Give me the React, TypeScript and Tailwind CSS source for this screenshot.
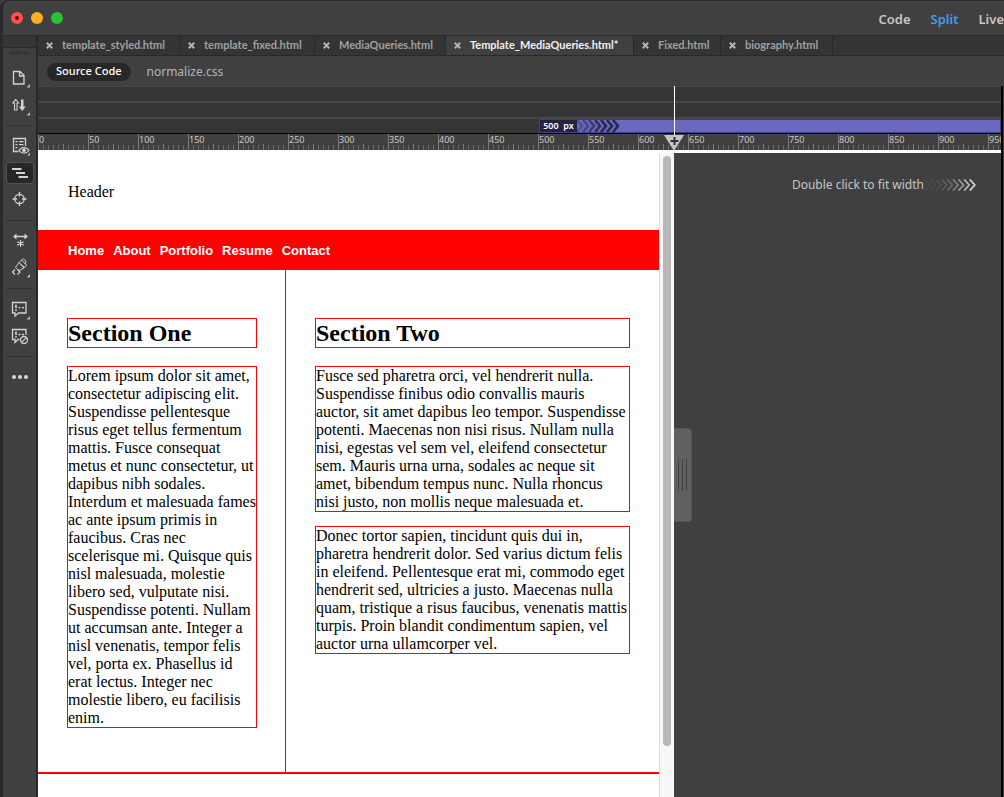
import React from "react";

const tabs = [
  { name: "template_styled.html", width: "w-[142px]" },
  { name: "template_fixed.html", width: "w-[135px]" },
  { name: "MediaQueries.html", width: "w-[131px]" },
  { name: "Template_MediaQueries.html*", width: "w-[188px]", active: true },
  { name: "Fixed.html", width: "w-[87px]" },
  { name: "biography.html", width: "w-[112px]" },
];

const rulerMarks = Array.from({ length: 20 }, (_, i) => i * 50);

function CloseMark() {
  return (
    <svg width="7" height="7" viewBox="0 0 7 7" aria-hidden="true">
      <path d="M.8 .8l5.400 5.400M6.200 .8l-5.400 5.400" stroke="currentColor" strokeWidth="2" />
    </svg>
  );
}

function Corner() {
  return <path d="M23 19v3.500h-3.500z" fill="#b8b8b8" stroke="none" />;
}

function ToolIcon({ children }: { children: React.ReactNode }) {
  return (
    <svg
      className="shrink-0"
      width="26"
      height="24"
      viewBox="0 0 26 24"
      fill="none"
      stroke="#d2d2d2"
      strokeWidth="1.3"
      aria-hidden="true"
    >
      {children}
    </svg>
  );
}

function Tool({
  label,
  height,
  active,
  children,
}: {
  label: string;
  height: string;
  active?: boolean;
  children: React.ReactNode;
}) {
  return (
    <button aria-label={label} className={`flex w-7 shrink-0 items-center justify-center ${height}`}>
      <span
        className={
          active
            ? "flex h-[22px] w-7 items-center justify-center overflow-hidden rounded-sm border border-[#505050] bg-[#272727]"
            : "flex"
        }
      >
        <ToolIcon>{children}</ToolIcon>
      </span>
    </button>
  );
}

function Divider({ height }: { height: string }) {
  return (
    <div className={`flex w-[26px] shrink-0 items-center ${height}`}>
      <div className="h-px w-full bg-[#333]" />
    </div>
  );
}

function Toolbar() {
  return (
    <aside className="flex w-[38px] shrink-0 flex-col border-l-[3px] border-r-2 border-l-[#2b2b2b] border-r-[#292929] bg-[#404040]">
      <div className="h-3 shrink-0 border-b border-[#292929] bg-[#353535]" />
      <div className="flex flex-col items-center">
        <div className="flex h-[15px] items-start pt-[3px]">
          <svg width="19" height="4" shapeRendering="crispEdges" aria-hidden="true">
            <path d="M0 2h19" stroke="#2e2e2e" strokeWidth="4" strokeDasharray="1 1" />
          </svg>
        </div>
        <Tool label="Open documents" height="h-[28px]">
          <path d="M6.500 6.500h6.500l4 4v8.500H6.500zM12.500 6.500v4.500H17" />
          <Corner />
        </Tool>
        <Tool label="File management" height="h-[28px]">
          <path d="M7.500 17v-7H5.800L8.700 6.500l3 3.500H10v7z" strokeWidth="1.100" />
          <path d="M14 6.500h2.500v7h2.200l-3.400 4.500-3.500-4.500H14z" fill="#d2d2d2" stroke="none" />
          <Corner />
        </Tool>
        <Divider height="h-[12px]" />
        <Tool label="Live view options" height="h-[28px]">
          <path d="M11.500 18.500h-5v-13h12v7.500" />
          <path d="M8.500 8.700h2M12 8.700h4.500M8.500 11.700h2M12 11.700h4.500M8.500 14.700h2" />
          <path d="M12 17.500c2.500-4 7.500-4 10 0-2.500 3.500-7.500 3.500-10 0z" fill="#404040" strokeWidth="1.100" />
          <circle cx="17" cy="17.200" r="1.900" fill="#d2d2d2" stroke="none" />
          <path d="M23 19.500v3h-3z" fill="#b8b8b8" stroke="none" />
        </Tool>
        <Tool label="Visual media queries" height="h-[28px]" active>
          <path d="M5 8h9.500M9 12h9M11.500 16h9.500" strokeWidth="2" />
        </Tool>
        <Tool label="Inspect" height="h-[24px]">
          <circle cx="12.500" cy="12" r="4.700" />
          <path d="M12.500 5v4.500M12.500 14.500V19M5.500 12H10M15 12h4.500" />
        </Tool>
        <Divider height="h-[18px]" />
        <Tool label="Expand all" height="h-[22px]">
          <path d="M8 8.500h11" strokeWidth="1.500" />
          <path d="M9.500 5.500L6 8.500l3.500 3zM17.500 5.500L21 8.500l-3.500 3z" fill="#d2d2d2" stroke="none" />
          <path d="M13.500 12v7M10.300 13.700l6.400 3.600M16.700 13.700l-6.400 3.600" strokeWidth="1.100" />
        </Tool>
        <Tool label="Format source code" height="h-[32px]">
          <path d="M8 14.500L5.500 17 8 19.500M10.500 14.500L13 17l-2.500 2.500" strokeWidth="1.200" />
          <path d="M8.500 12.500l3.500-5 5 5.500-5 2.500zM12 7.500l2.500-2.500 5 5-2.500 3M14.500 5l2-1.300 2.500 2.500-1 2.500M13 8.500l4 3.500" strokeWidth="1" />
          <Corner />
        </Tool>
        <Divider height="h-[10px]" />
        <Tool label="Apply comment" height="h-[32px]">
          <path d="M5.500 5.500h13.500v10.500h-7.500l-3.500 3V16H5.500z" />
          <path d="M9 7.800v3.500M9 12.400v1.600" strokeWidth="1.700" />
          <path d="M11.500 10.700h2M15 10.700h2" />
          <Corner />
        </Tool>
        <Tool label="Remove comment" height="h-[24px]">
          <path d="M12.500 14.500h-1.500l-3 3v-3H5.500v-10H19V10" />
          <path d="M9 6.500V10M9 11.200v1.500" strokeWidth="1.700" />
          <path d="M11.500 9.500h2M15 9.500h2" />
          <circle cx="17" cy="15" r="3.500" />
          <path d="M14.600 17.400l4.800-4.800" />
        </Tool>
        <Divider height="h-[14px]" />
        <Tool label="Customize toolbar" height="h-[28px]">
          <g fill="#d8d8d8" stroke="none">
            <circle cx="7" cy="12" r="2" />
            <circle cx="13" cy="12" r="2" />
            <circle cx="19" cy="12" r="2" />
          </g>
        </Tool>
      </div>
    </aside>
  );
}

function FitChevrons() {
  return (
    <svg width="52" height="12" fill="none" stroke="#dddddd" strokeWidth="1.6" aria-hidden="true">
      {Array.from({ length: 9 }, (_, i) => (
        <path key={i} d={`M${i * 5.6 + 1} .5l5 5.500-5 5.500`} opacity={0.05 + (0.95 * i * i) / 64} />
      ))}
    </svg>
  );
}

function QueryChevrons() {
  return (
    <svg width="44" height="12" fill="none" stroke="#292751" strokeWidth="2.6" aria-hidden="true">
      {Array.from({ length: 7 }, (_, i) => (
        <path key={i} d={`M${i * 6} 0l5 6-5 6`} opacity={Math.min(1, 0.4 + i * 0.15)} />
      ))}
    </svg>
  );
}

function MediaQueryBar() {
  return (
    <div className="relative h-12 shrink-0 border-b border-black bg-[#353535]">
      <div className="h-px bg-[#464646]" />
      <div className="mt-[14px] h-[2px] bg-[#464646]" />
      <div className="mt-[14px] h-[2px] bg-[#464646]" />
      <button className="absolute right-0 bottom-0 left-[501px] flex h-[14px] items-center border border-[#403c8c] bg-[#6c68bd]">
        <span className="flex h-full w-[37px] items-center justify-center bg-[#24223f] text-[9px] font-semibold whitespace-pre text-white">
          500  px
        </span>
        <QueryChevrons />
      </button>
    </div>
  );
}

function Ruler() {
  return (
    <div className="relative flex h-4 shrink-0 overflow-hidden bg-[#404040]">
      {rulerMarks.map((mark) => (
        <div key={mark} className="relative h-4 w-[50px] shrink-0">
          <svg className="absolute inset-0" width="50" height="16" shapeRendering="crispEdges" aria-hidden="true">
            <path d="M.5 0v16M25.500 10v6" stroke="#7c7c7c" />
            <path
              d="M5.500 11v5M10.500 11v5M15.500 11v5M20.500 11v5M30.500 11v5M35.500 11v5M40.500 11v5M45.500 11v5"
              stroke="#6a6a6a"
            />
          </svg>
          <span className="relative block pl-px text-[9px] leading-[11px] text-[#c8c8c8]">{mark}</span>
        </div>
      ))}
    </div>
  );
}

const paragraph = "text-base leading-[18px] border border-[#ff0000]";
const heading = "text-2xl leading-7 font-bold border border-[#ff0000]";

function PagePreview() {
  return (
    <main className="flex min-w-0 flex-1 flex-col bg-white font-['Liberation_Serif',serif] text-black">
      <header className="h-20 shrink-0 px-[30px] pt-8 text-base leading-5">Header</header>
      <nav className="flex h-10 shrink-0 items-center gap-[9px] bg-[#ff0000] px-[30px] pt-[2px] font-['Liberation_Sans',sans-serif] text-[13px] font-bold text-white">
        {["Home", "About", "Portfolio", "Resume", "Contact"].map((item) => (
          <a key={item} href="#">
            {item}
          </a>
        ))}
      </nav>
      <div className="flex h-[504px] shrink-0 border-b-2 border-[#ff0000]">
        <section className="w-[248px] shrink-0 border-r border-[#ff0000] pt-12 pr-7 pl-[29px]">
          <h2 className={heading}>Section One</h2>
          <p className={`mt-[18px] ${paragraph}`}>
            Lorem ipsum dolor sit amet, consectetur adipiscing elit. Suspendisse pellentesque risus eget tellus
            fermentum mattis. Fusce consequat metus et nunc consectetur, ut dapibus nibh sodales. Interdum et
            malesuada fames ac ante ipsum primis in faucibus. Cras nec scelerisque mi. Quisque quis nisl malesuada,
            molestie libero sed, vulputate nisi. Suspendisse potenti. Nullam ut accumsan ante. Integer a nisl
            venenatis, tempor felis vel, porta ex. Phasellus id erat lectus. Integer nec molestie libero, eu
            facilisis enim.
          </p>
        </section>
        <section className="min-w-0 flex-1 px-[29px] pt-12">
          <h2 className={heading}>Section Two</h2>
          <p className={`mt-[18px] ${paragraph}`}>
            Fusce sed pharetra orci, vel hendrerit nulla. Suspendisse finibus odio convallis mauris auctor, sit amet
            dapibus leo tempor. Suspendisse potenti. Maecenas non nisi risus. Nullam nulla nisi, egestas vel sem vel,
            eleifend consectetur sem. Mauris urna urna, sodales ac neque sit amet, bibendum tempus nunc. Nulla rhoncus
            nisi justo, non mollis neque malesuada et.
          </p>
          <p className={`mt-[14px] ${paragraph}`}>
            Donec tortor sapien, tincidunt quis dui in, pharetra hendrerit dolor. Sed varius dictum felis in eleifend.
            Pellentesque erat mi, commodo eget hendrerit sed, ultricies a justo. Maecenas nulla quam, tristique a
            risus faucibus, venenatis mattis turpis. Proin blandit condimentum sapien, vel auctor urna ullamcorper
            vel.
          </p>
        </section>
      </div>
    </main>
  );
}

export default function App() {
  return (
    <div className="flex h-screen flex-col overflow-hidden bg-[#404040] font-['Noto_Sans',sans-serif]">
      <header className="flex h-9 shrink-0 items-center justify-between rounded-tl-lg border-t border-b border-l-[3px] border-[#2b2b2b]">
        <div className="flex gap-2 pl-2">
          <button aria-label="Close window" className="flex size-3 items-center justify-center rounded-full bg-[#ff514c]">
            <span className="size-1 rounded-full bg-[#700]" />
          </button>
          <button aria-label="Minimize window" className="size-3 rounded-full bg-[#fdb026]" />
          <button aria-label="Zoom window" className="size-3 rounded-full bg-[#27c238]" />
        </div>
        <div className="flex gap-5 pt-1 text-[13px] font-semibold text-[#c6c6c6]">
          <button>Code</button>
          <button className="text-[#3f9df2]">Split</button>
          <button>Live</button>
        </div>
      </header>
      <div className="flex min-h-0 flex-1">
        <Toolbar />
        <div className="flex min-w-0 flex-1 flex-col">
          <div className="flex h-5 shrink-0 border-b border-[#292929] bg-[#343434]">
            {tabs.map((tab) => (
              <div
                key={tab.name}
                className={`flex shrink-0 items-center gap-[9px] border-r border-[#292929] pl-2 font-['Lato',sans-serif] text-[11px] font-bold ${tab.width} ${
                  tab.active ? "bg-[#404040] text-[#f0f0f0]" : "text-[#a0a0a0]"
                }`}
              >
                <button aria-label={`Close ${tab.name}`} className="text-[#b4b4b4]">
                  <CloseMark />
                </button>
                <button className="whitespace-nowrap">{tab.name}</button>
              </div>
            ))}
          </div>
          <div className="flex h-[30px] shrink-0 items-center gap-4 px-[9px] pt-px">
            <button className="h-[18px] rounded-full bg-[#272727] px-[9px] text-[11px] font-medium text-white">
              Source Code
            </button>
            <button className="text-[12px] text-[#b4b4b4]">normalize.css</button>
          </div>
          <div className="relative mr-[3px] flex min-h-0 flex-1 flex-col">
            <MediaQueryBar />
            <Ruler />
            <div className="h-[3px] shrink-0 bg-white" />
            <div className="flex min-h-0 flex-1">
              <div className="flex min-w-0 flex-1 overflow-hidden bg-white">
                <div className="-mt-[3px] flex min-w-0 flex-1">
                  <PagePreview />
                </div>
                <div className="flex w-[15px] shrink-0 flex-col items-center border-l border-[#dedede] bg-[#f8f8f8] pt-[3px]">
                  <div className="h-[590px] w-2 rounded-full bg-[#b8b8b8]" />
                </div>
              </div>
              <aside className="flex w-[327px] shrink-0 flex-col">
                <button className="mt-[25px] mr-[25px] flex items-center self-end text-[12px] leading-[14px] text-[#c6c6c6]">
                  Double click to fit width
                  <FitChevrons />
                </button>
                <button
                  aria-label="Resize viewport"
                  className="mt-[236px] flex h-[94px] w-[18px] items-center justify-center gap-[3px] rounded-r-sm border border-l-0 border-[#555] bg-[#606060]"
                >
                  <span className="h-8 w-px bg-[#404040]" />
                  <span className="h-8 w-px bg-[#404040]" />
                  <span className="h-8 w-px bg-[#404040]" />
                </button>
              </aside>
            </div>
            <svg className="absolute top-0 right-[317px]" width="20" height="66" aria-hidden="true">
              <path d="M10.500 0v50" stroke="#fff" />
              <path d="M0 49h20L10 65z" fill="#c6c6c6" />
              <path d="M10.500 51v8M6.500 55h8" stroke="#353535" strokeWidth="2" />
            </svg>
            <div className="absolute top-0 -right-[2px] bottom-0 w-[2px] bg-black" />
          </div>
        </div>
      </div>
    </div>
  );
}
